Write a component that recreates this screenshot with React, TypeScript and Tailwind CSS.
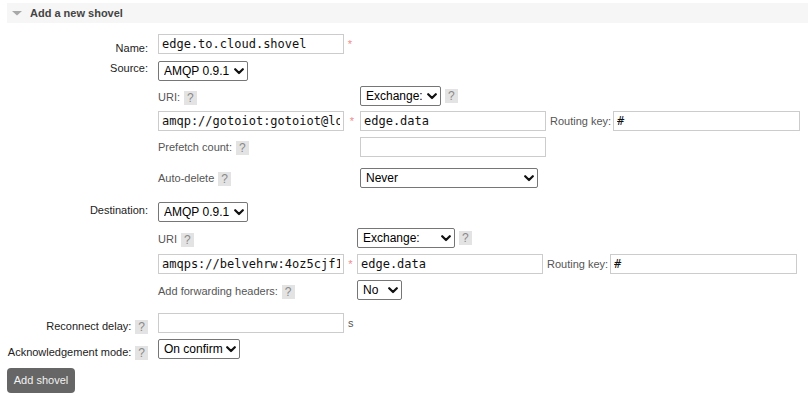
import React from "react";

const Help = () => (
  <span className="inline-block bg-[#e3e3e3] text-[#8a8a8a] px-[3px] leading-[14px] text-[12px] align-top ml-[4px]">?</span>
);

const Chevron = () => (
  <svg width="10" height="7" viewBox="0 0 10 7" className="absolute right-[4px] top-[7px] pointer-events-none">
    <path d="M1.2 1.2 L5 5 L8.8 1.2" stroke="#111" strokeWidth="2.2" fill="none" strokeLinecap="round" strokeLinejoin="round" />
  </svg>
);

function Sel({ value, className }: { value: string; className: string }) {
  return (
    <div className={"relative h-[20px] shrink-0 " + className}>
      <select
        defaultValue={value}
        className="appearance-none w-full h-full border border-[#767676] rounded-[2px] bg-white pl-[5px] pr-[12px] text-[12px] leading-[18px] text-black font-['Liberation_Sans',Arial,sans-serif] outline-none"
      >
        <option>{value}</option>
      </select>
      <Chevron />
    </div>
  );
}

function Inp({ value, className }: { value?: string; className: string }) {
  return (
    <input
      readOnly
      value={value ?? ""}
      className={
        "h-[20px] shrink-0 border border-[#cccccc] bg-white px-[3px] text-[12px] text-[#111] font-['DejaVu_Sans_Mono',monospace] outline-none " +
        className
      }
    />
  );
}

const Star = ({ className }: { className: string }) => (
  <span className={"shrink-0 text-center text-[#f08a8a] text-[11px] leading-[13px] pt-[4px] " + className}>*</span>
);

const Sub = ({ children, className }: { children: React.ReactNode; className: string }) => (
  <div className={"text-[#555] text-[11px] leading-[13px] whitespace-nowrap " + className}>{children}</div>
);

const Label = ({ children, className }: { children: React.ReactNode; className: string }) => (
  <div className={"w-[141px] shrink-0 mr-[10px] text-right text-[#222] text-[11px] leading-[13px] whitespace-nowrap " + className}>
    {children}
  </div>
);

export default function App() {
  return (
    <div className="w-[808px] h-[398px] overflow-hidden bg-white font-['Liberation_Sans',Arial,sans-serif] text-[11px]">
      <div className="pt-[3px] pl-[7px]">
        <div className="h-[20px] bg-[#f6f6f6] flex items-center">
          <svg width="10" height="5" viewBox="0 0 10 5" className="ml-[5px]">
            <path d="M0 0 L10 0 L5 4.5 Z" fill="#a8a8a8" />
          </svg>
          <span className="ml-[8px] font-bold text-[11px] text-[#444]">Add a new shovel</span>
        </div>
      </div>

      <div className="pl-[7px] pt-[11px] flex flex-col">
        {/* Name */}
        <div className="flex items-start">
          <Label className="pt-[8px]">Name:</Label>
          <Inp value="edge.to.cloud.shovel" className="w-[186px]" />
          <Star className="w-[12px]" />
        </div>

        {/* Source */}
        <div className="flex items-start mt-[6px]">
          <Label className="pt-[1px]">Source:</Label>
          <Sel value="AMQP 0.9.1" className="w-[90px]" />
        </div>

        <div className="ml-[151px] flex flex-col">
          <div className="flex items-start mt-[5px]">
            <Sub className="w-[202px] pt-[5px]">
              URI:<Help />
            </Sub>
            <Sel value="Exchange:" className="w-[81px]" />
            <span className="pt-[3px]"><Help /></span>
          </div>
          <div className="flex items-start mt-[5px]">
            <Inp value="amqp://gotoiot:gotoiot@localhost:5672" className="w-[186px]" />
            <Star className="w-[16px]" />
            <Inp value="edge.data" className="w-[186px]" />
            <Sub className="ml-[4px] w-[63px] pt-[4px]">Routing key:</Sub>
            <Inp value="#" className="w-[187px]" />
          </div>
          <div className="flex items-start mt-[6px]">
            <Sub className="w-[202px] pt-[4px]">
              Prefetch count:<Help />
            </Sub>
            <Inp className="w-[186px]" />
          </div>
          <div className="flex items-start mt-[11px]">
            <Sub className="w-[202px] pt-[4px]">
              Auto-delete<Help />
            </Sub>
            <Sel value="Never" className="w-[178px]" />
          </div>
        </div>

        {/* Destination */}
        <div className="flex items-start mt-[14px]">
          <Label className="pt-[2px]">Destination:</Label>
          <Sel value="AMQP 0.9.1" className="w-[90px]" />
        </div>

        <div className="ml-[151px] flex flex-col">
          <div className="flex items-start mt-[6px]">
            <Sub className="w-[199px] pt-[5px]">
              URI<Help />
            </Sub>
            <Sel value="Exchange:" className="w-[98px]" />
            <span className="pt-[3px]"><Help /></span>
          </div>
          <div className="flex items-start mt-[6px]">
            <Inp value="amqps://belvehrw:4oz5cjf1lR@jackal.rmq.cloudamqp.com/belvehrw" className="w-[186px]" />
            <Star className="w-[13px]" />
            <Inp value="edge.data" className="w-[186px]" />
            <Sub className="ml-[4px] w-[63px] pt-[4px]">Routing key:</Sub>
            <Inp value="#" className="w-[187px]" />
          </div>
          <div className="flex items-start mt-[6px]">
            <Sub className="w-[199px] pt-[5px]">
              Add forwarding headers:<Help />
            </Sub>
            <Sel value="No" className="w-[45px]" />
          </div>
        </div>

        {/* Reconnect */}
        <div className="flex items-start mt-[13px]">
          <Label className="pt-[7px]">
            Reconnect delay:<Help />
          </Label>
          <Inp className="w-[186px]" />
          <span className="ml-[4px] pt-[4px] text-[#555] text-[11px] leading-[13px]">s</span>
        </div>
        <div className="flex items-start mt-[5px]">
          <Label className="pt-[7px]">
            Acknowledgement mode:<Help />
          </Label>
          <Sel value="On confirm" className="w-[82px]" />
        </div>

        <div className="mt-[8px]">
          <button className="h-[25px] w-[68px] rounded-[4px] bg-[#666666] text-[#f2f2f2] text-[11px] font-['Liberation_Sans',Arial,sans-serif]">
            Add shovel
          </button>
        </div>
      </div>
    </div>
  );
}
